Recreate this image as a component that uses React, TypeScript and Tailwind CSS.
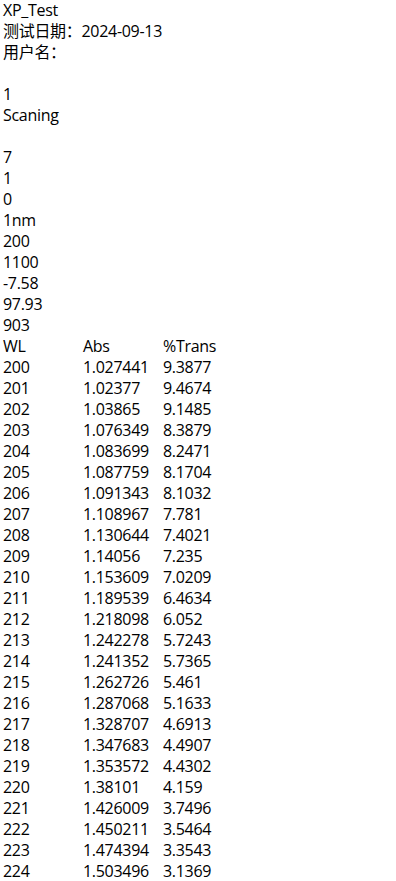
import React from "react";

const header = [
  "XP_Test",
  "测试日期：2024-09-13",
  "用户名：",
  "",
  "1",
  "Scaning",
  "",
  "7",
  "1",
  "0",
  "1nm",
  "200",
  "1100",
  "-7.58",
  "97.93",
  "903",
];

const rows = [
  ["WL", "Abs", "%Trans"],
  ["200", "1.027441", "9.3877"],
  ["201", "1.02377", "9.4674"],
  ["202", "1.03865", "9.1485"],
  ["203", "1.076349", "8.3879"],
  ["204", "1.083699", "8.2471"],
  ["205", "1.087759", "8.1704"],
  ["206", "1.091343", "8.1032"],
  ["207", "1.108967", "7.781"],
  ["208", "1.130644", "7.4021"],
  ["209", "1.14056", "7.235"],
  ["210", "1.153609", "7.0209"],
  ["211", "1.189539", "6.4634"],
  ["212", "1.218098", "6.052"],
  ["213", "1.242278", "5.7243"],
  ["214", "1.241352", "5.7365"],
  ["215", "1.262726", "5.461"],
  ["216", "1.287068", "5.1633"],
  ["217", "1.328707", "4.6913"],
  ["218", "1.347683", "4.4907"],
  ["219", "1.353572", "4.4302"],
  ["220", "1.38101", "4.159"],
  ["221", "1.426009", "3.7496"],
  ["222", "1.450211", "3.5464"],
  ["223", "1.474394", "3.3543"],
  ["224", "1.503496", "3.1369"],
];

export default function App() {
  return (
    <div className="min-h-screen bg-white px-[3px] pt-0 text-[16px] leading-[21px] tracking-[-0.3px] text-black font-['Open_Sans','Noto_Sans_CJK_SC',sans-serif]">
      {header.map((line, i) => (
        <div key={i} className="h-[21px] whitespace-pre">
          {line}
        </div>
      ))}
      {rows.map((r, i) => (
        <div key={"r" + i} className="flex h-[21px]">
          <span className="w-[80px]">{r[0]}</span>
          <span className="w-[80px]">{r[1]}</span>
          <span>{r[2]}</span>
        </div>
      ))}
    </div>
  );
}
